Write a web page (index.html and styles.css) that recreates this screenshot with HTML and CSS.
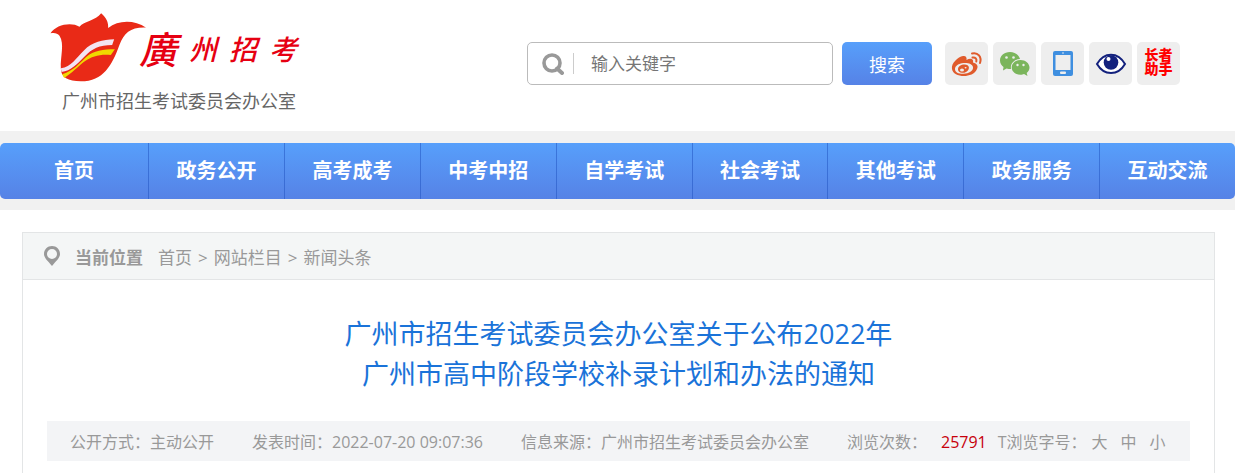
FILE: index.html
```html
<!DOCTYPE html>
<html lang="zh-CN">
<head>
    <meta charset="UTF-8">
    <meta name="viewport" content="width=device-width, initial-scale=1.0">
    <title>广州市招生考试委员会办公室</title>
    <link rel="stylesheet" href="styles.css">
</head>
<body>

    <header class="header">
        <a class="logo" href="#">
            <span class="logo-top">
                <svg class="logo-mark" viewBox="28 38 290 207" aria-hidden="true">
                    <path fill="#e92a17" d="M29 99C45 72 92 64 116 79C130 62 164 62 181 39C197 53 203 66 202 83C232 59 280 58 316 82C270 80 250 98 236 133C214 194 188 243 120 243C82 242 60 232 60 204C58 170 72 130 56 106C50 99 42 97 29 99Z"/>
                    <path fill="#f3e4f2" d="M60 204C92 200 105 174 130 150C154 124 186 119 220 117L214 134C176 134 153 145 132 168C110 191 90 212 62 215Z"/>
                    <path fill="#f0d800" d="M64 222C100 210 114 190 136 170C158 151 188 147 222 147L210 164C176 161 154 168 132 183C110 199 94 219 70 233Z"/>
                </svg>
                <span class="logo-name"><b>廣</b><i>州</i><i>招</i><i>考</i></span>
            </span>
            <span class="logo-sub">广州市招生考试委员会办公室</span>
        </a>

        <div class="tools">
            <form class="search">
                <div class="search-box">
                    <svg class="search-icon" viewBox="0 0 22 22" aria-hidden="true">
                        <circle cx="10" cy="10" r="8" fill="none" stroke="#999" stroke-width="3.6"/>
                        <path d="M15 15.500L20 20" stroke="#999" stroke-width="4" stroke-linecap="round"/>
                    </svg>
                    <input type="text" class="search-input" placeholder="输入关键字" aria-label="输入关键字">
                </div>
                <button type="button" class="search-button">搜索</button>
            </form>

            <div class="links">
                <a href="#" aria-label="微博">
                    <svg viewBox="0 0 43 43">
                        <path fill="#e05b2c" fill-rule="evenodd" d="M7 27C6 21 13 15 18 14C21 13.500 22 15.500 21.500 18C25 16 29 16.500 28 20.500C32 21.500 33.500 24 32 27C30 32 24 34 19 34C13 34 7.500 31.500 7 27ZM10 27C10 30.500 14 32 18.500 31.800C24 31.500 28.500 29 28 25C27.500 22 23 20.500 18.500 21C13.500 21.500 10 24 10 27Z"/>
                        <path fill="#e05b2c" fill-rule="evenodd" d="M13 27.500C13 24 16.500 22.300 20 22.500C23.300 22.700 24.700 25 23.500 27.500C22.300 30 19.500 31 17 30.800C14.500 30.600 13 29.500 13 27.500ZM15 28A2 1.600 0 1 0 19 28A2 1.600 0 1 0 15 28ZM19.600 25.800A1 .8 0 1 0 21.600 25.800A1 .8 0 1 0 19.600 25.800Z"/>
                        <path fill="none" stroke="#e05b2c" stroke-width="2" stroke-linecap="round" d="M27 11.500C33 10 37 15 35 21M27.500 15.500C30.500 15 32 17 31.300 19.500"/>
                    </svg>
                </a>
                <a href="#" aria-label="微信">
                    <svg viewBox="0 0 43 43">
                        <path fill="#7bb55c" d="M17 10C11 10 7 14 7 18.500C7 21.500 8.500 23.500 10.500 25L10 28.500L13.500 26.500C15 27 16.500 27 18 27C17 21.500 21.500 17 27 17C26 13 22 10 17 10Z"/>
                        <path fill="#7bb55c" d="M27.500 18C22.500 18 18.700 21.500 18.700 25.500C18.700 29.500 22.500 32.700 27.500 32.700C29 32.700 30 32.500 31 32L34.500 34L33.700 31C35.500 29.500 36.500 27.500 36.500 25.500C36.500 21.500 32.500 18 27.500 18Z"/>
                        <g fill="#eee">
                            <circle cx="13.500" cy="15.500" r="1.300"/>
                            <circle cx="20.500" cy="15.500" r="1.300"/>
                            <circle cx="24.500" cy="23" r="1.200"/>
                            <circle cx="30.500" cy="23" r="1.200"/>
                        </g>
                    </svg>
                </a>
                <a href="#" aria-label="手机版">
                    <svg viewBox="0 0 43 43">
                        <rect x="12" y="9" width="20" height="25" rx="2" fill="#3f8fe0"/>
                        <rect x="14.500" y="13" width="15" height="15" fill="#eee"/>
                        <circle cx="22" cy="11" r="0.8" fill="#eee"/>
                        <rect x="19" y="29.500" width="6" height="2.500" rx="1" fill="#eee"/>
                    </svg>
                </a>
                <a href="#" aria-label="无障碍浏览">
                    <svg viewBox="0 0 43 43">
                        <path fill="#fff" stroke="#13217d" stroke-width="2" d="M8 22C15 9.500 29 9.500 36 22C29 34 15 34 8 22Z"/>
                        <circle cx="22" cy="20.500" r="7.300" fill="#13217d"/>
                        <circle cx="19.500" cy="17" r="2" fill="#fff"/>
                    </svg>
                </a>
                <a href="#" class="elder">长者<br>助手</a>
            </div>
        </div>
    </header>

    <nav class="nav">
        <ul>
            <li><a href="#">首页</a></li>
            <li><a href="#">政务公开</a></li>
            <li><a href="#">高考成考</a></li>
            <li><a href="#">中考中招</a></li>
            <li><a href="#">自学考试</a></li>
            <li><a href="#">社会考试</a></li>
            <li><a href="#">其他考试</a></li>
            <li><a href="#">政务服务</a></li>
            <li><a href="#">互动交流</a></li>
        </ul>
    </nav>

    <main class="content">
        <div class="position">
            <svg class="pin" viewBox="0 0 16 20" aria-hidden="true">
                <path fill="#999" fill-rule="evenodd" d="M8 0C3.500 0 0 3.500 0 8C0 12 4 15 8 20C12 15 16 12 16 8C16 3.500 12.500 0 8 0ZM8 3A5 5 0 1 1 8 13A5 5 0 1 1 8 3Z"/>
            </svg>
            <strong>当前位置</strong>
            <div class="crumbs">
                <a href="#">首页</a>
                <span>&gt;</span>
                <a href="#">网站栏目</a>
                <span>&gt;</span>
                <a href="#">新闻头条</a>
            </div>
        </div>

        <h1>广州市招生考试委员会办公室关于公布2022年<br>广州市高中阶段学校补录计划和办法的通知</h1>

        <div class="info">
            <span>公开方式：主动公开</span>
            <span>发表时间：2022-07-20 09:07:36</span>
            <span>信息来源：广州市招生考试委员会办公室</span>
            <div class="views">浏览次数：<b>25791</b></div>
            <div class="font-size">T浏览字号：<a href="#">大</a><a href="#">中</a><a href="#">小</a></div>
        </div>
    </main>

</body>
</html>
```
FILE: styles.css
```css
* {
    box-sizing: border-box;
}

body {
    font-family: "Open Sans", "Noto Sans CJK SC", sans-serif;
    margin: 0;
    min-height: 100vh;
    display: flex;
    flex-direction: column;
    background-color: #fff;
    color: #999;
}

a {
    color: inherit;
    text-decoration: none;
}

/* Header */
.header {
    display: flex;
    justify-content: space-between;
    align-items: flex-start;
    padding: 13px 55px 16px 50px;
}

.logo {
    display: flex;
    flex-direction: column;
}

.logo-top {
    display: flex;
    align-items: center;
    height: 69px;
}

.logo-mark {
    width: 97px;
    height: 69px;
}

.logo-name {
    display: flex;
    align-items: center;
    gap: 12px;
    margin-left: -8px;
    color: #e60012;
    font-size: 28px;
    font-style: italic;
    font-weight: 500;
}

.logo-name b {
    font-size: 38px;
    font-weight: 500;
}

.logo-sub {
    padding-left: 12px;
    margin-top: 5px;
    color: #666;
    font-size: 18px;
    line-height: 28px;
}

.tools {
    display: flex;
    gap: 13px;
    padding-top: 29px;
}

/* Search */
.search {
    display: flex;
    gap: 9px;
}

.search-box {
    display: flex;
    align-items: center;
    width: 306px;
    height: 43px;
    padding-left: 14px;
    border: 1px solid #bbb;
    border-radius: 5px;
}

.search-icon {
    width: 22px;
    height: 22px;
    margin-right: 9px;
}

.search-input {
    flex: 1;
    min-width: 0;
    height: 21px;
    padding: 0 0 0 17px;
    border: none;
    border-left: 1px solid #ccc;
    outline: none;
    background: none;
    font-family: inherit;
    font-size: 17px;
}

.search-input::placeholder {
    color: #757575;
}

.search-button {
    width: 90px;
    height: 43px;
    padding: 0;
    border: none;
    border-radius: 5px;
    background: linear-gradient(#579ffb, #5682e6);
    color: #fff;
    font-family: inherit;
    font-size: 18px;
    cursor: pointer;
}

/* Square links beside the search */
.links {
    display: flex;
    gap: 5px;
}

.links a {
    width: 43px;
    height: 43px;
    border-radius: 5px;
    background-color: #eee;
}

.links svg {
    display: block;
}

.links .elder {
    padding-top: 6px;
    color: #f00;
    font-size: 14px;
    font-weight: 900;
    line-height: 14px;
    text-align: center;
}

/* Navigation */
.nav {
    padding: 12px 0 11px;
    background-color: #f1f1f1;
}

.nav ul {
    display: grid;
    grid-template-columns: 12fr repeat(8, 11fr);
    margin: 0;
    padding: 0;
    list-style: none;
    border-radius: 5px;
    background: linear-gradient(#579ffb, #5682e6);
    overflow: hidden;
}

.nav li + li {
    border-left: 1px solid rgba(30, 80, 190, 0.5);
}

.nav a {
    display: block;
    color: #fff;
    font-size: 20px;
    font-weight: bold;
    line-height: 56px;
    text-align: center;
}

/* Article */
.content {
    flex: 1;
    margin: 22px 20px 0 22px;
    border: 1px solid #e3e5e6;
    border-bottom: none;
}

.position {
    display: flex;
    align-items: center;
    height: 47px;
    padding-left: 21px;
    border-bottom: 1px solid #e3e5e6;
    background-color: #f4f6f6;
    font-size: 17px;
}

.pin {
    width: 16px;
    height: 20px;
    margin-right: 15px;
}

.position strong {
    margin-right: 15px;
}

.crumbs {
    display: flex;
    align-items: baseline;
    gap: 6px;
}

h1 {
    margin: 34px 0 27px;
    color: #1a73d9;
    font-size: 27px;
    font-weight: 400;
    line-height: 40px;
    text-align: center;
}

.info {
    display: flex;
    align-items: center;
    height: 40px;
    margin: 0 24px;
    padding: 0 23px;
    background-color: #f3f4f6;
    font-size: 16px;
    white-space: nowrap;
}

.info span {
    margin-right: 38px;
}

.views b {
    margin: 0 11px 0 14px;
    color: #c7000b;
    font-weight: 400;
}

.font-size a {
    margin-left: 13px;
}

.font-size a:first-child {
    margin-left: 5px;
}
```
